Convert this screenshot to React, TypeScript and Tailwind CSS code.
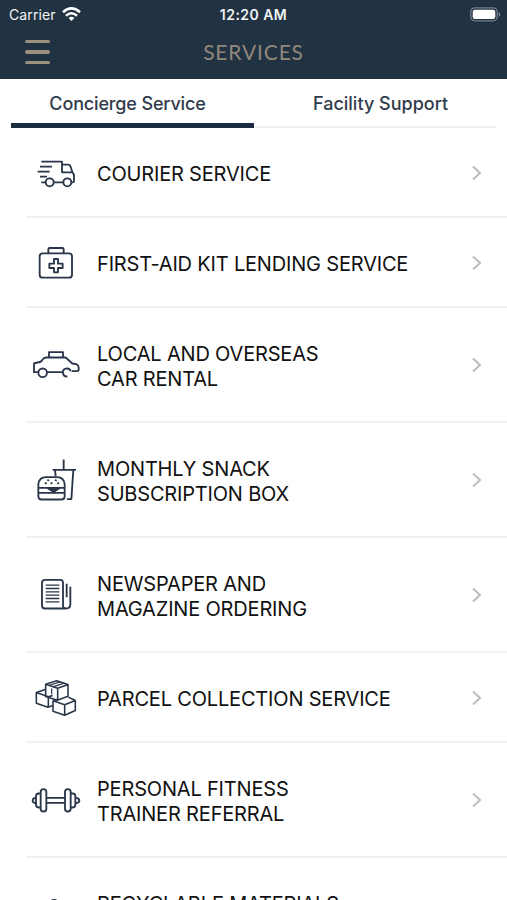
import type { ReactNode } from "react";
import clsx from "clsx";

interface Service {
  lines: string[];
  viewBox: string;
  icon: ReactNode;
}

const SERVICES: Service[] = [
  {
    lines: ["COURIER SERVICE"],
    viewBox: "18 -6 150 180",
    icon: (
      <>
        <path d="M64 50H126V83M60 65H96M53 80H89M60 95H81M64 112H77M101 112H130M126 59H145Q149 59 151 63L157 81L162 89V108Q162 112 158 112H155M126 82H157" />
        <circle cx="89" cy="112" r="12" />
        <circle cx="142" cy="112" r="12" />
      </>
    ),
  },
  {
    lines: ["FIRST-AID KIT LENDING SERVICE"],
    viewBox: "18 -6 150 180",
    icon: (
      <>
        <rect x="59" y="55" width="97" height="73" rx="9" />
        <path d="M85 54V43Q85 39 89 39H127Q131 39 131 43V54" />
        <path d="M102 72H114V86H128V99H114V112H102V99H88V86H102Z" />
      </>
    ),
  },
  {
    lines: ["LOCAL AND OVERSEAS", "CAR RENTAL"],
    viewBox: "18 1.5 150 180",
    icon: (
      <>
        <path d="M54 113H42V87L52 84Q63 84 67 76Q71 69 79 69H137L157 87L169 89Q176 92 176 99V106Q176 110 170 110H155M82 113H129" />
        <path d="M87 68V53H129V68" />
        <circle cx="68" cy="115" r="13" />
        <path d="M142 126A12 12 0 1 1 152 110" />
      </>
    ),
  },
  {
    lines: ["MONTHLY SNACK", "SUBSCRIPTION BOX"],
    viewBox: "18 1.5 150 180",
    icon: (
      <>
        <path d="M131 30V60M98 61H168M105 62L107 80M160 62L154 149H141" />
        <path d="M55 115V105Q57 83 78 83H111Q132 83 134 105V115ZM55 115V130H134V115M55 130V140Q55 150 65 150H124Q134 150 134 140V130M84 116L101 127L117 116" />
        <path d="M84 116H117L101 127Z" fill="#29364a" />
        <path strokeWidth="5" d="M82 91L87 94M105 91L110 94M75 103L80 99M92 103L97 99M112 103L117 99" />
      </>
    ),
  },
  {
    lines: ["NEWSPAPER AND", "MAGAZINE ORDERING"],
    viewBox: "18 1.5 150 180",
    icon: (
      <>
        <path d="M137 132H75Q66 132 66 123V55Q66 46 75 46H121Q129 46 129 54V124Q129 132 137 132Q151 132 151 120V67M140 58V98" />
        <path strokeWidth="4" d="M77 62H118M77 72H118M77 82H118M77 92H118M77 102H118M77 112H118" />
      </>
    ),
  },
  {
    lines: ["PARCEL COLLECTION SERVICE"],
    viewBox: "18 -7.5 150 180",
    icon: (
      <g strokeWidth="4.7">
        <path d="M77 41L110 31L144 42L113 53ZM77 41V78L112 89L144 77V42M113 53V88" />
        <path strokeWidth="3.6" d="M87 45L120 34M99 49L132 38M95 54V71" />
        <path d="M76 57L49 66L85 79L98 75M49 66V98L84 110L99 105M85 79V109" />
        <path d="M99 91L114 86M99 91L134 103L166 90L145 80M99 91V122L134 134L166 120V90M134 103V133" />
      </g>
    ),
  },
  {
    lines: ["PERSONAL FITNESS", "TRAINER REFERRAL"],
    viewBox: "18 -1.5 150 180",
    icon: (
      <>
        <rect x="62" y="56" width="17" height="67" rx="8.5" />
        <rect x="135" y="56" width="17" height="67" rx="8.5" />
        <path d="M80 82H134M80 97H134M61 69H56Q48 69 48 77V103Q48 111 56 111H61M153 69H158Q166 69 166 77V103Q166 111 158 111H153M47 82H45Q38 84 38 90Q38 96 45 98H47M167 82H170Q178 84 178 90Q178 96 170 98H167" />
      </>
    ),
  },
  {
    lines: ["RECYCLABLE MATERIALS", "COLLECTION"],
    viewBox: "18 0 150 180",
    icon: <path d="M74 80L88 52Q102 37 116 52L130 80M60 95L47 118Q43 128 55 128H82M105 128H138Q150 128 143 116L135 102" />,
  },
];

function Chevron() {
  return (
    <svg width="10" height="16" viewBox="0 0 10 16" fill="none" stroke="#bdbdbf" strokeWidth="2" className="mt-px mr-[25px] ml-auto shrink-0">
      <path d="M1 1.5L8 8L1 14.5" />
    </svg>
  );
}

function StatusBar() {
  return (
    <div className="grid h-7 grid-cols-3 items-center pr-1.5 pl-[9px] text-[14px] text-[#f2f4f5]">
      <div className="flex items-center gap-[6px]">
        <span className="tracking-[0.1px]">Carrier</span>
        <svg width="19" height="15" viewBox="0 0 19 15" fill="none" stroke="#fff" strokeWidth="2.5">
          <path d="M1 5.2Q9.5 -2.4 18 5.2M4 8.7Q9.5 3.9 15 8.7" />
          <path d="M6.6 11Q9.5 8.6 12.4 11L9.5 14Z" fill="#fff" stroke="none" />
        </svg>
      </div>
      <span className="pr-[3px] text-center font-semibold tracking-[0.45px] whitespace-nowrap">12:20 AM</span>
      <svg width="31" height="15" viewBox="0 0 31 15" className="justify-self-end">
        <rect x=".8" y=".8" width="26.4" height="13" rx="4" fill="none" stroke="#747f8a" strokeWidth="1.3" />
        <rect x="2.7" y="2.7" width="22.6" height="9.2" rx="2.2" fill="#fff" />
        <path d="M28.6 5Q32 7.3 28.6 9.7Z" fill="#7d8791" />
      </svg>
    </div>
  );
}

export default function App() {
  return (
    <div className="h-[900px] w-[507px] overflow-hidden bg-white font-['Inter',sans-serif]">
      <header className="h-[79px] bg-[#213242]">
        <StatusBar />
        <div className="grid h-12 grid-cols-3 items-center">
          <div className="ml-[25px] flex w-[25px] flex-col gap-[7px]">
            <span className="h-[3.5px] rounded-full bg-[#9c917e]" />
            <span className="h-[3.5px] rounded-full bg-[#9c917e]" />
            <span className="h-[3.5px] rounded-full bg-[#9c917e]" />
          </div>
          <h1 className="text-center font-['Lato',sans-serif] text-[21px] tracking-[0.85px] text-[#91877a]">SERVICES</h1>
        </div>
      </header>

      <nav className="flex h-[49px] pr-[10px] pl-[11px] text-[18px] font-medium text-[#303b4b]">
        <button className="w-[243px] border-b-[5px] border-[#1b2c40] pt-[5px] pr-[10px] tracking-[-0.15px]">Concierge Service</button>
        <button className="flex-1 border-b-2 border-[#f2f2f3] pt-[2px] pl-[10px]">Facility Support</button>
      </nav>

      <ul>
        {SERVICES.map((s) => (
          <li key={s.lines[0]} className={clsx("ml-[26px] flex items-center border-b-2 border-[#f1f1f2]", s.lines.length > 1 ? "h-[115px]" : "h-[90px]")}>
            <svg width="50" height="60" viewBox={s.viewBox} fill="none" stroke="#29364a" strokeWidth="5.5" strokeLinejoin="round" className="mt-px shrink-0 overflow-visible">
              {s.icon}
            </svg>
            <div className="ml-[21px] pt-1 text-[20px] leading-[24.5px] tracking-[-0.18px] text-[#111]">
              {s.lines.map((line) => (
                <div key={line} className="whitespace-nowrap">{line}</div>
              ))}
            </div>
            <Chevron />
          </li>
        ))}
      </ul>
    </div>
  );
}
